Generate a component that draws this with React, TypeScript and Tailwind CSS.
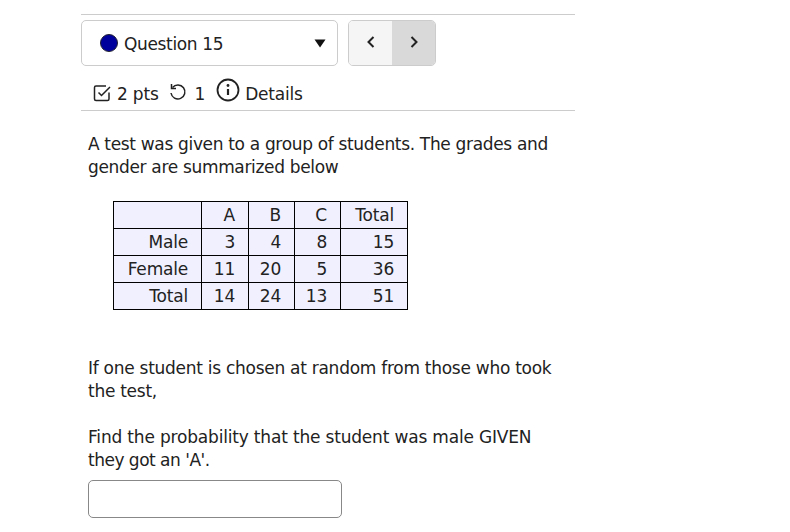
import React from "react";

const rows = [
  ["", "A", "B", "C", "Total"],
  ["Male", "3", "4", "8", "15"],
  ["Female", "11", "20", "5", "36"],
  ["Total", "14", "24", "13", "51"],
];
const widths = ["w-[88px]", "w-[47px]", "w-[46px]", "w-[46px]", "w-[67px]"];

export default function App() {
  return (
    <div className="w-[790px] h-[532px] overflow-hidden bg-white text-[#222] font-['DejaVu_Sans',sans-serif] text-[17px] tracking-[-0.2px]">
      <div className="ml-[81px] w-[494px] pt-[14px]">
        <div className="h-px bg-[#ccc]" />
        <div className="flex mt-[5px] gap-[10px]">
          <div className="w-[257px] h-[46px] border border-[#ccc] rounded-[5px] flex items-center pl-[18px] pr-[11px]">
            <span className="w-[18px] h-[18px] rounded-full bg-[#00009c] border border-[#223]" />
            <span className="ml-[6px] mt-[3px] tracking-[-0.35px]">Question 15</span>
            <svg className="ml-auto" width="12" height="9" viewBox="0 0 12 9"><path d="M0.5 0.5h11L6 8.5z" fill="#111" /></svg>
          </div>
          <div className="flex w-[88px] h-[46px] border border-[#ccc] rounded-[5px] overflow-hidden">
            <div className="w-[43px] bg-[#f5f5f5] flex items-center justify-center">
              <svg className="mb-[3px]" width="10" height="14" viewBox="0 0 10 14" fill="none" stroke="#222" strokeWidth="2"><path d="M7.5 2 2.5 7l5 5" /></svg>
            </div>
            <div className="flex-1 bg-[#d9d9d9] flex items-center justify-center">
              <svg className="mb-[3px]" width="10" height="14" viewBox="0 0 10 14" fill="none" stroke="#222" strokeWidth="2"><path d="M2.5 2l5 5-5 5" /></svg>
            </div>
          </div>
        </div>
        <div className="flex items-center h-[44px] pt-[10px] pl-[11px]">
          <svg width="20" height="20" viewBox="0 0 20 20" fill="none" stroke="#222" strokeWidth="1.5"><path d="M17 9.5V16a1.5 1.5 0 0 1-1.500 1.500H4A1.500 1.500 0 0 1 2.500 16V4.500A1.500 1.500 0 0 1 4 3h10" /><path d="M6.500 9.500l3 3L18 4" /></svg>
          <span className="ml-[5px] mt-[4px]">2 pts</span>
          <svg className="ml-[9px] mb-[2px]" width="20" height="20" viewBox="0 0 20 20" fill="none" stroke="#222" strokeWidth="1.5"><path d="M4.500 5.500A7 7 0 1 1 3 11" /><path d="M3.500 2v4.500H8" /></svg>
          <span className="ml-[7px] mt-[4px]">1</span>
          <svg className="ml-[11px] mb-[6px]" width="24" height="24" viewBox="0 0 24 24" fill="none" stroke="#222" strokeWidth="1.800"><circle cx="12" cy="12" r="10.500" /><path d="M12 11v6" strokeWidth="2.200" /><circle cx="12" cy="7.500" r="1.400" fill="#222" stroke="none" /></svg>
          <span className="ml-[5px] mt-[4px]">Details</span>
        </div>
        <div className="h-px bg-[#ccc]" />
        <div className="pl-[7px] leading-[23px] pt-[22px]">
          <p className="tracking-[-0.33px]">A test was given to a group of students. The grades and<br />gender are summarized below</p>
          <table className="mt-[22px] ml-[25px] border-collapse bg-[#f0f0ff] text-[17px] leading-[25px] tracking-[-0.2px]">
            <tbody>
              {rows.map((r, i) => (
                <tr key={i} className="h-[27px]">
                  {r.map((c, j) => (
                    <td key={j} className={`${widths[j]} border border-black text-right p-0 pt-[1px] pr-[13px]`}>{c}</td>
                  ))}
                </tr>
              ))}
            </tbody>
          </table>
          <p className="mt-[47px] tracking-[-0.27px]">If one student is chosen at random from those who took<br />the test,</p>
          <p className="mt-[23px] tracking-[-0.18px]">Find the probability that the student was male GIVEN<br /><span className="tracking-[-0.5px]">they got an 'A'.</span></p>
          <div className="mt-[8px] w-[254px] h-[38px] border border-[#888] rounded-[5px]" />
        </div>
      </div>
    </div>
  );
}
